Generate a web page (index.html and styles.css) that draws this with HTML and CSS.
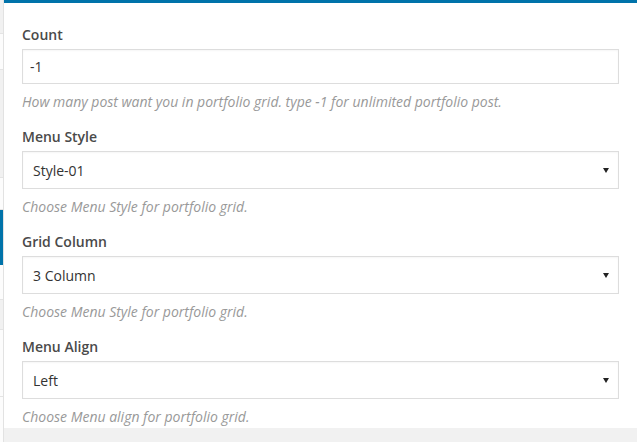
FILE: index.html
```html
<!DOCTYPE html>
<html lang="en">
<head>
    <meta charset="UTF-8">
    <meta name="viewport" content="width=device-width, initial-scale=1.0">
    <title>Portfolio Grid Settings</title>
    <link rel="stylesheet" href="styles.css">
</head>
<body>
    <div class="screen">
        <aside class="backdrop">
            <div class="strip strip-grey s33"></div>
            <div class="strip strip-white s36"></div>
            <div class="strip strip-grey s107"></div>
            <div class="strip strip-white s32"></div>
            <div class="strip strip-active"></div>
            <div class="strip strip-white s35"></div>
            <div class="strip strip-grey s29"></div>
            <div class="strip strip-white s66"></div>
            <div class="strip strip-white"></div>
        </aside>

        <div class="panel">
            <div class="panel-body">
                <div class="field">
                    <label class="field-label" for="count">Count</label>
                    <input class="control" id="count" type="text" value="-1">
                    <p class="field-help">How many post want you in portfolio grid. type -1 for unlimited portfolio post.</p>
                </div>

                <div class="field">
                    <label class="field-label" for="menu-style">Menu Style</label>
                    <div class="select-wrap">
                        <select class="control" id="menu-style">
                            <option>Style-01</option>
                            <option>Style-02</option>
                        </select>
                    </div>
                    <p class="field-help">Choose Menu Style for portfolio grid.</p>
                </div>

                <div class="field">
                    <label class="field-label" for="grid-column">Grid Column</label>
                    <div class="select-wrap">
                        <select class="control" id="grid-column">
                            <option>3 Column</option>
                            <option>2 Column</option>
                            <option>4 Column</option>
                        </select>
                    </div>
                    <p class="field-help">Choose Menu Style for portfolio grid.</p>
                </div>

                <div class="field">
                    <label class="field-label" for="menu-align">Menu Align</label>
                    <div class="select-wrap">
                        <select class="control" id="menu-align">
                            <option>Left</option>
                            <option>Center</option>
                            <option>Right</option>
                        </select>
                    </div>
                    <p class="field-help">Choose Menu align for portfolio grid.</p>
                </div>
            </div>
            <div class="panel-foot"></div>
        </div>
    </div>
</body>
</html>
```

FILE: styles.css
```css
* {
    margin: 0;
    padding: 0;
    box-sizing: border-box;
}

body {
    font-family: 'Open Sans', 'Liberation Sans', sans-serif;
    background: #f1f1f1;
    color: #444;
    overflow: hidden;
}

.screen {
    display: flex;
    height: 442px;
}

/* bit of the admin page peeking out on the left */
.backdrop {
    width: 4px;
    display: flex;
    flex-direction: column;
    border-right: 1px solid #e2e2e2;
}

.strip {
    flex: none;
    border-bottom: 1px solid #e4e4e4;
}

.strip:last-child {
    flex: 1;
    border: 0;
}

.s29 { height: 30px; }
.s32 { height: 32px; }
.s33 { height: 34px; }
.s35 { height: 35px; }
.s36 { height: 36px; }
.s66 { height: 67px; }
.s107 { height: 108px; }

.strip-grey { background: #f1f1f1; }
.strip-white { background: #fcfcfc; }

.strip-active {
    background: #0073aa;
    height: 55px;
    border: 0;
}

.panel {
    flex: 1;
    display: flex;
    flex-direction: column;
    background: #fff;
    border-top: 3px solid #0073aa;
}

.panel-body {
    flex: 1;
    padding: 22px 18px 0 18px;
    overflow: hidden;
}

.panel-foot {
    height: 14px;
    background: #f1f1f1;
}

.field {
    margin-bottom: 15px;
}

.field-label {
    display: block;
    font-size: 14px;
    font-weight: 600;
    line-height: 20px;
    color: #4a4a4a;
    margin-bottom: 4px;
}

.control {
    display: block;
    width: 100%;
    height: 35px;
    padding: 0 7px;
    font-family: inherit;
    font-size: 14px;
    color: #333;
    background: #fff;
    border: 1px solid #ddd;
    box-shadow: inset 0 1px 2px rgba(0, 0, 0, 0.04);
    outline: none;
}

.select-wrap {
    position: relative;
}

.select-wrap .control {
    height: 38px;
    padding: 0 24px 0 10px;
    appearance: none;
    -webkit-appearance: none;
    border-radius: 0;
}

.select-wrap::after {
    content: '';
    position: absolute;
    right: 10px;
    top: 17px;
    border-left: 3px solid transparent;
    border-right: 3px solid transparent;
    border-top: 5px solid #222;
}

.field-help {
    margin-top: 8px;
    font-size: 14px;
    font-style: italic;
    line-height: 20px;
    color: #999;
}
```
